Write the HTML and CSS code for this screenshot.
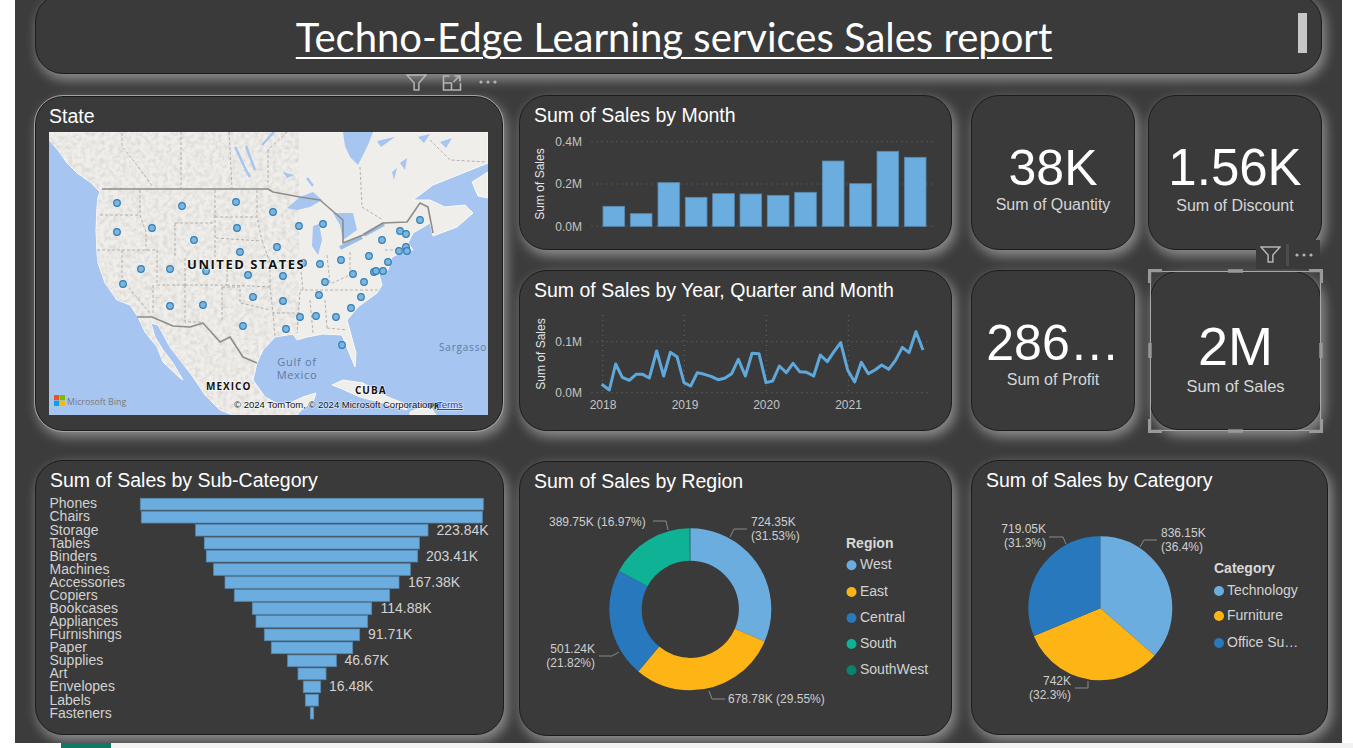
FILE: index.html
```html
<!DOCTYPE html>
<html lang="en">
<head>
<meta charset="utf-8">
<title>Techno-Edge Learning services Sales report</title>
<link rel="stylesheet" href="styles.css">
</head>
<body>
<main class="canvas">
  <header class="card title-card">
    <h1 class="report-title">Techno-Edge Learning services Sales report</h1>
    <span class="title-mark"></span>
  </header>

  <section class="top-row">
    <article class="card state-card">
      <div class="vis-header state-header">
        <svg class="ico" viewBox="0 0 22 18"><path d="M1 1h20l-7.5 8.5V17h-5V9.5z"/></svg>
        <svg class="ico" viewBox="0 0 20 17"><path d="M7 2H1v14h17V9M1 9h8v7M11 8l6-6M12 2h5.5v5.5"/></svg>
        <svg class="ico dots" viewBox="0 0 20 4"><circle cx="3" cy="2" r="1.6"/><circle cx="10" cy="2" r="1.6"/><circle cx="17" cy="2" r="1.6"/></svg>
      </div>
      <h2 class="card-title state-title">State</h2>
      <svg class="map" viewBox="49 132 439 283">
        <defs>
          <clipPath id="landclip"><path d="M49,132V140L58,150L67,163L77,173L90,182L100,192L98,197L97,207L96,230L97,253L98,263L105,283L117,300L130,305L138,317L145,332L157,347L163,362L180,378L183,380L173,363L163,350L155,337L151,323L158,325L170,347L180,360L193,377L205,395L220,410L233,415H297L303,408L313,402L316,393L303,397L290,403L280,405L265,397L253,380L257,363L263,350L275,337L293,334L297,340L307,337L323,334L342,335L348,350L355,367L356,353L347,320L358,307L377,293L382,285L378,270L388,270L392,257L407,250L413,250L408,243L413,233L430,223L433,236L457,227L473,213L465,205L445,207L430,200L413,200L433,185L453,177L488,163V132Z"/></clipPath>
          <filter id="terrain" x="0" y="0" width="100%" height="100%">
            <feTurbulence type="fractalNoise" baseFrequency="0.22" numOctaves="3" seed="4"/>
            <feColorMatrix values="0 0 0 0 0.45 0 0 0 0 0.45 0 0 0 0 0.43 1.4 0 0 0 -0.55"/>
          </filter>
        </defs>
        <rect class="water" x="49" y="132" width="439" height="283"/>
        <path class="land" d="M49,132V140L58,150L67,163L77,173L90,182L100,192L98,197L97,207L96,230L97,253L98,263L105,283L117,300L130,305L138,317L145,332L157,347L163,362L180,378L183,380L173,363L163,350L155,337L151,323L158,325L170,347L180,360L193,377L205,395L220,410L233,415H297L303,408L313,402L316,393L303,397L290,403L280,405L265,397L253,380L257,363L263,350L275,337L293,334L297,340L307,337L323,334L342,335L348,350L355,367L356,353L347,320L358,307L377,293L382,285L378,270L388,270L392,257L407,250L413,250L408,243L413,233L430,223L433,236L457,227L473,213L465,205L445,207L430,200L413,200L433,185L453,177L488,163V132Z"/>
        <path class="land" d="M332,385L343,380L363,383L383,395L403,403L407,410L383,403L360,397L340,388Z"/>
        <path class="land" d="M410,412L420,408L432,409L436,415H410Z"/>
        <path class="land" d="M472,182L488,172V198L478,196Z"/>
        <rect class="terrain" x="49" y="132" width="250" height="283" clip-path="url(#landclip)" filter="url(#terrain)"/>
        <path class="water" d="M343,132H373L368,145L358,165L350,157L345,146ZM377,141L395,137L381,147ZM287,208L300,197L313,192L322,200L310,207L297,210ZM333,213L353,213L357,230L343,240L340,225ZM313,226L319,224L322,240L318,255L312,246ZM418,137L430,134L424,143ZM440,142L452,138L446,148ZM400,163L407,158L405,170ZM392,172L397,168L394,180ZM283,172L294,175L287,178Z"/>
        <path class="lake" d="M235,147C240,155 242,165 250,177M246,146L255,170M274,132L262,145M307,178L313,186"/>
        <path class="lake thick" d="M340,248L362,237M364,235L384,224"/>
        <path class="dash" d="M122,133V147L133,160L153,187M181,132V188M229,132L232,188M268,150V186M287,132L268,150M360,167L362,207L383,220M430,140L450,160L487,162M140,190V215L146,232V250M100,215H140M175,223H215M175,223V257M215,190V257M215,217H257M257,190V217L262,241M216,238L261,241M157,250V283M185,258V285M122,250V280L150,313M153,285V315M97,250H157M157,285H185M185,285H227V257M227,285L270,287M222,287V322M185,285V322H203M222,287H240V303L270,310M270,287L273,313L300,313M273,313L275,337M300,292L297,333M310,300L313,333M325,300L327,328M327,328L347,330M300,290H380M327,255L330,284M350,252L350,275L330,284M262,241L270,262L270,287M262,262H300M300,262L303,290M385,250H400"/>
        <path class="border" d="M102,189H268L273,192L300,197L320,200L343,220L343,243L363,235L383,223L407,222L420,203L428,207L433,233"/>
        <path class="border" d="M137,317H152L173,326L190,327L203,323L220,342L230,337L243,357L257,363"/>
        <g class="pins">
          <circle cx="117" cy="203" r="3.3"/><circle cx="182" cy="206" r="3.3"/><circle cx="236" cy="202" r="3.3"/><circle cx="273" cy="212" r="3.3"/><circle cx="117" cy="232" r="3.3"/><circle cx="152" cy="228" r="3.3"/><circle cx="237" cy="228" r="3.3"/><circle cx="194" cy="240" r="3.3"/><circle cx="299" cy="226" r="3.3"/><circle cx="323" cy="224" r="3.3"/><circle cx="420" cy="220" r="3.3"/><circle cx="400" cy="231" r="3.3"/><circle cx="406" cy="234" r="3.3"/><circle cx="382" cy="240" r="3.3"/><circle cx="406" cy="247" r="3.3"/><circle cx="399" cy="251" r="3.3"/><circle cx="407" cy="251" r="3.3"/><circle cx="240" cy="252" r="3.3"/><circle cx="277" cy="247" r="3.3"/><circle cx="369" cy="256" r="3.3"/><circle cx="341" cy="260" r="3.3"/><circle cx="320" cy="264" r="3.3"/><circle cx="303" cy="263" r="3.3"/><circle cx="388" cy="262" r="3.3"/><circle cx="374" cy="272" r="3.3"/><circle cx="376" cy="271" r="3.3"/><circle cx="383" cy="271" r="3.3"/><circle cx="353" cy="274" r="3.3"/><circle cx="364" cy="282" r="3.3"/><circle cx="325" cy="282" r="3.3"/><circle cx="283" cy="276" r="3.3"/><circle cx="248" cy="275" r="3.3"/><circle cx="206" cy="271" r="3.3"/><circle cx="170" cy="269" r="3.3"/><circle cx="141" cy="269" r="3.3"/><circle cx="123" cy="284" r="3.3"/><circle cx="319" cy="295" r="3.3"/><circle cx="361" cy="297" r="3.3"/><circle cx="253" cy="297" r="3.3"/><circle cx="283" cy="301" r="3.3"/><circle cx="170" cy="306" r="3.3"/><circle cx="203" cy="305" r="3.3"/><circle cx="351" cy="308" r="3.3"/><circle cx="300" cy="317" r="3.3"/><circle cx="316" cy="316" r="3.3"/><circle cx="336" cy="317" r="3.3"/><circle cx="243" cy="326" r="3.3"/><circle cx="286" cy="329" r="3.3"/><circle cx="342" cy="345" r="3.3"/>
        </g>
        <text class="m-country" x="187" y="269">UNITED STATES</text>
        <text class="m-country small" x="206" y="390">MEXICO</text>
        <text class="m-country small" x="355" y="394">CUBA</text>
        <text class="m-water" x="297" y="366" text-anchor="middle">Gulf of</text>
        <text class="m-water" x="297" y="379" text-anchor="middle">Mexico</text>
        <text class="m-water sea" x="439" y="351">Sargasso</text>
        <rect x="54" y="395" width="5.2" height="5.2" fill="#f25022"/><rect x="59.8" y="395" width="5.2" height="5.2" fill="#7fba00"/><rect x="54" y="400.8" width="5.2" height="5.2" fill="#00a4ef"/><rect x="59.8" y="400.8" width="5.2" height="5.2" fill="#ffb900"/>
        <text class="m-bing" x="67" y="404.5">Microsoft Bing</text>
        <text class="m-pr" x="429" y="409">PR</text>
        <text class="m-attr" x="234" y="408">© 2024 TomTom, © 2024 Microsoft Corporation</text>
        <text class="m-terms" x="437" y="408">Terms</text>
      </svg>
    </article>

    <div class="mid-col">
      <article class="card month-card">
        <h2 class="card-title">Sum of Sales by Month</h2>
        <svg class="chart" viewBox="520 127 431 122">
          <g class="grid"><path d="M591.5,141.7H935M591.5,184H935M591.5,226H935"/></g>
          <g class="bars" transform="translate(510 90) scale(.33333)">
            <rect x="279" y="349" width="65" height="60"/><rect x="361" y="371" width="65" height="38"/><rect x="444" y="278" width="65" height="131"/><rect x="526" y="322" width="65" height="87"/><rect x="608" y="311" width="65" height="98"/><rect x="690" y="312" width="65" height="97"/><rect x="772" y="316" width="65" height="93"/><rect x="854" y="307" width="65" height="102"/><rect x="937" y="213" width="65" height="196"/><rect x="1019" y="281" width="65" height="128"/><rect x="1101" y="184" width="65" height="225"/><rect x="1183" y="202" width="65" height="207"/>
          </g>
          <g class="axis" text-anchor="end"><text x="582" y="146">0.4M</text><text x="582" y="188">0.2M</text><text x="582" y="231">0.0M</text></g>
          <text class="axis-title" transform="translate(544 184) rotate(-90)" text-anchor="middle">Sum of Sales</text>
        </svg>
      </article>
      <article class="card year-card">
        <h2 class="card-title">Sum of Sales by Year, Quarter and Month</h2>
        <svg class="chart" viewBox="520 302 431 128">
          <g class="grid"><path d="M591.5,341.7H930M591.5,392.7H930M602.7,315V392.7M684.3,315V392.7M766.3,315V392.7M848.3,315V392.7"/></g>
          <polyline class="trend" transform="translate(510 90) scale(.33333)" points="275,883 298,900 317,822 337,862 358,871 378,853 398,853 418,864 440,783 461,858 481,787 501,800 522,878 542,888 562,848 583,853 603,859 624,869 644,865 665,851 685,808 706,858 726,790 747,791 768,878 788,873 808,828 829,848 849,820 869,845 890,847 911,858 931,795 952,815 972,785 992,758 1013,840 1034,876 1054,817 1075,851 1095,840 1115,825 1136,838 1156,812 1177,772 1197,788 1218,725 1239,780"/>
          <g class="axis" text-anchor="end"><text x="582" y="346">0.1M</text><text x="582" y="397">0.0M</text></g>
          <g class="axis" text-anchor="middle"><text x="603" y="409">2018</text><text x="685" y="409">2019</text><text x="766.5" y="409">2020</text><text x="848.5" y="409">2021</text></g>
          <text class="axis-title" transform="translate(545 354) rotate(-90)" text-anchor="middle">Sum of Sales</text>
        </svg>
      </article>
    </div>

    <div class="kpi-grid">
      <article class="card kpi"><div class="kpi-value">38K</div><div class="kpi-label">Sum of Quantity</div></article>
      <article class="card kpi"><div class="kpi-value v51">1.56K</div><div class="kpi-label lower">Sum of Discount</div></article>
      <article class="card kpi"><div class="kpi-value">286…</div><div class="kpi-label">Sum of Profit</div></article>
      <article class="card kpi sales-card">
        <div class="vis-header sales-header">
          <svg class="ico" viewBox="0 0 22 18"><path d="M1 1h20l-7.5 8.5V17h-5V9.5z"/></svg>
          <span class="sep"></span>
          <svg class="ico dots" viewBox="0 0 20 4"><circle cx="3" cy="2" r="1.6"/><circle cx="10" cy="2" r="1.6"/><circle cx="17" cy="2" r="1.6"/></svg>
        </div>
        <div class="kpi-value v54">2M</div><div class="kpi-label lower big">Sum of Sales</div>
        <svg class="selection" viewBox="0 0 175 164">
          <rect class="sel-frame" x="2.5" y="2.5" width="170" height="159"/>
          <path class="sel-handle" d="M1.5,14V1.5H14M161,1.5H173.5V14M1.5,150V162.5H14M161,162.5H173.5V150M80,2H95M80,162H95M2,74V89M173,74V89"/>
        </svg>
      </article>
    </div>
  </section>

  <section class="bottom-row">
    <article class="card sub-card">
      <h2 class="card-title">Sum of Sales by Sub-Category</h2>
      <svg class="chart" viewBox="36 492 467 242">
        <g class="bars" transform="translate(0 450) scale(.33333)">
          <rect x="421" y="145" width="1029" height="35"/><rect x="424" y="184" width="1023" height="35"/><rect x="587" y="223" width="697" height="35"/><rect x="613" y="262" width="645" height="35"/><rect x="619" y="301" width="634" height="35"/><rect x="641" y="341" width="590" height="35"/><rect x="675" y="380" width="522" height="35"/><rect x="703" y="419" width="466" height="35"/><rect x="757" y="458" width="358" height="35"/><rect x="768" y="497" width="335" height="35"/><rect x="793" y="537" width="286" height="35"/><rect x="814" y="576" width="244" height="35"/><rect x="863" y="615" width="146" height="35"/><rect x="894" y="654" width="84" height="35"/><rect x="910" y="693" width="52" height="35"/><rect x="916" y="733" width="39" height="35"/><rect x="931" y="772" width="10" height="35"/>
        </g>
        <g class="cat">
          <text x="49.5" y="508">Phones</text><text x="49.5" y="521">Chairs</text><text x="49.5" y="535">Storage</text><text x="49.5" y="548">Tables</text><text x="49.5" y="561">Binders</text><text x="49.5" y="574">Machines</text><text x="49.5" y="587">Accessories</text><text x="49.5" y="600">Copiers</text><text x="49.5" y="613">Bookcases</text><text x="49.5" y="626">Appliances</text><text x="49.5" y="639">Furnishings</text><text x="49.5" y="652">Paper</text><text x="49.5" y="665">Supplies</text><text x="49.5" y="678">Art</text><text x="49.5" y="691">Envelopes</text><text x="49.5" y="705">Labels</text><text x="49.5" y="718">Fasteners</text>
        </g>
        <g class="cat vals">
          <text x="436.5" y="535">223.84K</text><text x="426" y="561">203.41K</text><text x="408" y="587">167.38K</text><text x="380.5" y="613">114.88K</text><text x="368" y="639">91.71K</text><text x="344.5" y="665">46.67K</text><text x="329" y="691">16.48K</text>
        </g>
      </svg>
    </article>

    <article class="card region-card">
      <h2 class="card-title">Sum of Sales by Region</h2>
      <svg class="chart" viewBox="520 493 431 242">
        <g transform="rotate(-90 690.3 609.3)" fill="none" stroke-width="32.4">
          <circle cx="690.3" cy="609.3" r="64.8" pathLength="100" stroke="#6cade0" stroke-dasharray="31.53 100"/>
          <circle cx="690.3" cy="609.3" r="64.8" pathLength="100" stroke="#fdb515" stroke-dasharray="29.55 100" stroke-dashoffset="-31.53"/>
          <circle cx="690.3" cy="609.3" r="64.8" pathLength="100" stroke="#2878bd" stroke-dasharray="21.82 100" stroke-dashoffset="-61.08"/>
          <circle cx="690.3" cy="609.3" r="64.8" pathLength="100" stroke="#0fb294" stroke-dasharray="16.97 100" stroke-dashoffset="-82.9"/>
          <circle cx="690.3" cy="609.3" r="64.8" pathLength="100" stroke="#0a8270" stroke-dasharray="0.13 100" stroke-dashoffset="-99.87"/>
        </g>
        <path class="leader" d="M730,537L734,529H747M668,530L666,521H653M619,652L612,656H599M709,691L712,699H725"/>
        <g class="lab">
          <text x="751" y="526">724.35K</text><text x="751" y="540">(31.53%)</text>
          <text x="549" y="526">389.75K (16.97%)</text>
          <text x="595" y="653" text-anchor="end">501.24K</text><text x="595" y="667" text-anchor="end">(21.82%)</text>
          <text x="728" y="703">678.78K (29.55%)</text>
        </g>
        <text class="legend-head" x="846" y="548">Region</text>
        <g class="cat">
          <circle cx="851.5" cy="565.3" r="5" fill="#6cade0"/><text x="860" y="569">West</text>
          <circle cx="851.5" cy="592" r="5" fill="#fdb515"/><text x="860" y="596">East</text>
          <circle cx="851.5" cy="618" r="5" fill="#2878bd"/><text x="860" y="622">Central</text>
          <circle cx="851.5" cy="644" r="5" fill="#0fb294"/><text x="860" y="648">South</text>
          <circle cx="851.5" cy="670.3" r="5" fill="#0a8270"/><text x="860" y="674">SouthWest</text>
        </g>
      </svg>
    </article>

    <article class="card category-card">
      <h2 class="card-title">Sum of Sales by Category</h2>
      <svg class="chart" viewBox="972 492 355 242">
        <g transform="rotate(-90 1100.3 608.3)" fill="none" stroke-width="72">
          <circle cx="1100.3" cy="608.3" r="36" pathLength="100" stroke="#6cade0" stroke-dasharray="36.4 100"/>
          <circle cx="1100.3" cy="608.3" r="36" pathLength="100" stroke="#fdb515" stroke-dasharray="32.3 100" stroke-dashoffset="-36.4"/>
          <circle cx="1100.3" cy="608.3" r="36" pathLength="100" stroke="#2878bd" stroke-dasharray="31.3 100" stroke-dashoffset="-68.7"/>
        </g>
        <path class="leader" d="M1140,547L1144,540H1157M1066,544L1063,537H1049M1088,681V688H1075"/>
        <g class="lab">
          <text x="1161" y="537">836.15K</text><text x="1161" y="551">(36.4%)</text>
          <text x="1046" y="533" text-anchor="end">719.05K</text><text x="1046" y="547" text-anchor="end">(31.3%)</text>
          <text x="1071" y="685" text-anchor="end">742K</text><text x="1071" y="699" text-anchor="end">(32.3%)</text>
        </g>
        <text class="legend-head" x="1214" y="573">Category</text>
        <g class="cat">
          <circle cx="1219" cy="591" r="5" fill="#6cade0"/><text x="1227" y="595">Technology</text>
          <circle cx="1219" cy="616" r="5" fill="#fdb515"/><text x="1227" y="620">Furniture</text>
          <circle cx="1219" cy="643" r="5" fill="#2878bd"/><text x="1227" y="647">Office Su…</text>
        </g>
      </svg>
    </article>
  </section>
</main>
<footer class="tabs">
  <span class="tab-active"></span>
  <span class="tab-rest"></span>
</footer>
</body>
</html>
```
FILE: styles.css
```css
* { box-sizing: border-box; }
html, body { margin: 0; height: 100%; overflow: hidden; }
body { background: #fff; font-family: "Liberation Sans", Arial, sans-serif; color: #fff; }

.canvas {
  width: 1327px;
  height: 743px;
  margin-left: 15px;
  padding-left: 20px;
  background: #3c3c3c;
  overflow: hidden;
  display: flex;
  flex-direction: column;
}

.card {
  position: relative;
  background: #3a3a3a;
  border: 1px solid #1c1c1c;
  border-radius: 28px;
  box-shadow: 3px 5px 12px 1px #8c8c8c;
  display: flex;
  flex-direction: column;
  flex: none;
}

.title-card {
  width: 1287px;
  height: 80px;
  margin-top: -6px;
  align-items: center;
  justify-content: flex-end;
  padding: 0 9px 10px 0;
}
.report-title {
  margin: 0;
  font: 400 40px/52px Lato, "Open Sans", sans-serif;
  color: #fff;
  text-decoration: underline;
  text-decoration-thickness: 2px;
  text-underline-offset: 5px;
  white-space: nowrap;
}
.title-mark {
  position: absolute;
  right: 14px;
  top: 18px;
  width: 9px;
  height: 40px;
  background: #c6c6c6;
}

.top-row { display: flex; gap: 16px; margin-top: 21px; height: 336px; flex: none; }
.bottom-row { display: flex; margin-top: 29px; flex: none; }

.card-title {
  margin: 0;
  padding: 7px 14px 0;
  font: 400 19.5px/24px "Liberation Sans", Arial, sans-serif;
  color: #fff;
  white-space: nowrap;
  flex: none;
}
.state-title { padding-left: 13px; }

.state-card { width: 468px; height: 335px; margin-top: 1px; outline: 1px solid #a4a4a4; outline-offset: 0; }
.map { display: block; width: 439px; height: 283px; margin: 4px 0 0 13px; flex: none; }

.mid-col { width: 433px; display: flex; flex-direction: column; gap: 20px; }
.month-card { height: 155px; }
.year-card { height: 161px; }
.chart { display: block; width: 100%; flex: 1; min-height: 0; }

.kpi-grid {
  display: grid;
  grid-template-columns: 164px 174px;
  grid-template-rows: 155px 161px;
  column-gap: 13px;
  row-gap: 20px;
  margin-left: 3px;
}
.kpi { padding-top: 47px; align-items: center; white-space: nowrap; }
.kpi-value { font-size: 50px; line-height: 50px; }
.v51 { font-size: 51px; }
.v54 { font-size: 54px; line-height: 54px; }
.kpi-label { font-size: 16px; line-height: 20px; margin-top: 2px; color: #d6d6d6; }
.lower { margin-top: 3px; }
.big { font-size: 16.5px; }
.sales-card { margin: 1px 1px 1px 2px; }

.sub-card { width: 469px; height: 275px; }
.region-card { width: 433px; height: 275px; margin: 1px 0 0 15px; }
.category-card { width: 357px; height: 275px; margin-left: 19px; }

/* visual header overlays */
.vis-header { position: absolute; display: flex; align-items: center; }
.state-header { top: -25px; right: 4px; gap: 15px; height: 20px; }
.sales-header {
  top: -32px;
  right: 0;
  width: 64px;
  height: 29px;
  padding: 0 5px 0 4px;
  gap: 5px;
  background: #3a3a3a;
}
.ico { width: 21px; height: 17px; fill: none; stroke: #b4b4b4; stroke-width: 1.6; flex: none; }
.dots { width: 20px; height: 4px; fill: #b4b4b4; stroke: none; }
.sep { width: 3px; height: 22px; background: #4c4c4c; flex: none; }

.selection { position: absolute; left: -3px; top: -3px; width: 175px; height: 164px; pointer-events: none; }
.sel-frame { fill: none; stroke: #a8a8a8; stroke-width: 1; }
.sel-handle { fill: none; stroke: #999; stroke-width: 3.4; }

/* map */
.water { fill: #a6c5f0; }
.land { fill: #f0eeea; stroke: #fbfaf8; stroke-width: 1; }
.terrain { opacity: .55; }
.lake { fill: none; stroke: #a6c5f0; stroke-width: 2.4; }
.lake.thick { stroke-width: 4; stroke: #9cbce8; }
.dash { fill: none; stroke: #a3a3a0; stroke-width: .8; stroke-dasharray: 3 2; }
.border { fill: none; stroke: #8d8d8a; stroke-width: 1.6; stroke-linejoin: round; }
.pins circle { fill: #7eb5de; stroke: #2e7fb6; stroke-width: 1.2; }
.m-country {
  font: 700 13px "Open Sans", sans-serif;
  letter-spacing: 1.55px;
  fill: #111;
  stroke: #fff;
  stroke-width: 1.5;
  stroke-opacity: .7;
  paint-order: stroke;
}
.m-country.small { font-size: 10px; letter-spacing: 1px; }
.m-water { font: 400 11px "Open Sans", sans-serif; letter-spacing: .7px; fill: #62799f; }
.sea { font-size: 10px; letter-spacing: .8px; }
.m-bing { font: 400 8.8px "Open Sans", sans-serif; fill: #7a7a7a; }
.m-pr { font: 700 8px "Open Sans", sans-serif; fill: #222; }
.m-attr, .m-terms { font: 400 9.5px "Liberation Sans", Arial, sans-serif; stroke: #fff; stroke-width: 1.4; stroke-opacity: .55; paint-order: stroke; }
.m-attr { fill: #111; }
.m-terms { fill: #2340b0; text-decoration: underline; }

/* charts */
.grid path { fill: none; stroke: #6a6a6a; stroke-width: 1; stroke-dasharray: 1 4; }
.bars rect { fill: #6cade0; stroke: #5688b0; stroke-width: 2.5; }
.trend { fill: none; stroke: #5fa8db; stroke-width: 9; stroke-linejoin: round; }
.axis text { font-size: 12px; fill: #c4c4c4; }
.axis-title { font-size: 12px; fill: #e4e4e4; }
.cat text { font-size: 14px; fill: #d2d2d2; }
.lab text { font-size: 12px; fill: #cfcfcf; }
.legend-head { font-size: 14px; font-weight: 700; fill: #d8d8d8; }
.leader { fill: none; stroke: #8a8a8a; stroke-width: 1; }

/* page tab strip */
.tabs { display: flex; height: 5px; margin-left: 61px; }
.tab-active { width: 50px; background: #117865; }
.tab-rest { flex: 1; background: #f3f2f1; }
```
